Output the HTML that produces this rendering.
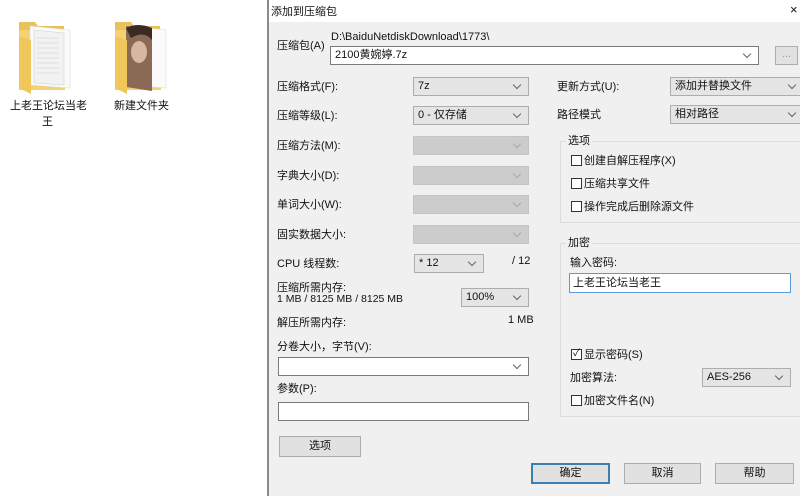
<!DOCTYPE html>
<html><head><meta charset="utf-8"><style>
*{box-sizing:border-box;margin:0;padding:0}
body{width:800px;height:496px;overflow:hidden;background:#fff;position:relative;font-family:"Liberation Sans","Noto Sans CJK SC",sans-serif;font-size:11px;color:#111}
.a{position:absolute;white-space:nowrap}
.dlg{position:absolute;left:267px;top:0;width:533px;height:496px;background:#f0f0f0;border-left:2px solid #8a8a8a}
.tb{position:absolute;left:269px;top:0;width:531px;height:22px;background:#fff}
.cb{position:absolute;height:19px;border:1px solid #adadad;background:#e5e5e5;padding-left:4px;line-height:17px;font-size:11px}
.cb.w{background:#fff;border-color:#7a7a7a}
.cb.d{background:#cccccc;border-color:#c4c4c4}
.cb:after{content:"";position:absolute;right:8px;top:4px;width:5px;height:5px;border-right:1px solid #666;border-bottom:1px solid #666;transform:rotate(45deg)}
.cb.d:after{border-color:#aaa}
.chk{position:absolute;width:11px;height:11px;border:1px solid #333;background:#fff}
.btn{position:absolute;height:21px;border:1px solid #adadad;background:#e1e1e1;text-align:center;line-height:19px}
.grp{position:absolute;border:1px solid #dcdcdc}
.gt{position:absolute;background:#f0f0f0;padding:0 2px}
.fold{position:absolute}
</style></head><body>
<svg class="fold" style="left:16px;top:16px" width="60" height="78" viewBox="0 0 60 78">
<path d="M3 6h16l3 4h26v8H3z" fill="#e8c25a"/>
<path d="M3 14h46v60H3z" fill="#f4d272"/>
<path d="M14 10l40 4v58l-40-3z" fill="#fafafa" stroke="#ddd" stroke-width=".6"/>
<path d="M18 14l30 3v52l-30-2z" fill="#f2f2f2" stroke="#ccc" stroke-width=".5"/>
<g stroke="#c8c8c8" stroke-width=".6"><path d="M21 22h22M21 27h22M21 32h22M21 37h22M21 42h22M21 47h22M21 52h22M21 57h22"/></g>
<path d="M3 20l12 4v54L3 72z" fill="#f0c75a"/>
</svg>
<div class="a" style="left:10px;top:97px;font-size:11px">上老王论坛当老</div>
<div class="a" style="left:42px;top:113px;font-size:11px">王</div>
<svg class="fold" style="left:112px;top:16px" width="60" height="78" viewBox="0 0 60 78">
<path d="M3 6h16l3 4h26v8H3z" fill="#e8c25a"/>
<path d="M3 14h46v60H3z" fill="#f4d272"/>
<path d="M14 10l40 4v58l-40-3z" fill="#fbfbfb" stroke="#ddd" stroke-width=".6"/>
<path d="M14 10l26 2v63l-26-4z" fill="#8a6a55"/>
<ellipse cx="27" cy="36" rx="8" ry="11" fill="#d7b7a2"/>
<path d="M14 12q12-6 26 0v12q-8-10-21-2z" fill="#3a2a22"/>
<path d="M3 20l12 4v54L3 72z" fill="#f0c75a"/>
</svg>
<div class="a" style="left:114px;top:97px;font-size:11px">新建文件夹</div>

<div class="dlg"></div>
<div class="tb"></div>
<div class="a" style="left:271px;top:3px">添加到压缩包</div>
<div class="a" style="left:790px;top:2px;font-size:13px">×</div>

<div class="a" style="left:277px;top:37px">压缩包(A)</div>
<div class="a" style="left:331px;top:31px">D:\BaiduNetdiskDownload\1773\</div>
<div class="cb w" style="left:330px;top:46px;width:429px">2100黄婉婷.7z</div>
<div class="btn" style="left:775px;top:46px;width:23px;height:19px;color:#999;line-height:15px">...</div>

<div class="a" style="left:277px;top:78px">压缩格式(F):</div>
<div class="cb" style="left:413px;top:77px;width:116px">7z</div>
<div class="a" style="left:277px;top:107px">压缩等级(L):</div>
<div class="cb" style="left:413px;top:106px;width:116px">0 - 仅存储</div>
<div class="a" style="left:277px;top:137px">压缩方法(M):</div>
<div class="cb d" style="left:413px;top:136px;width:116px"></div>
<div class="a" style="left:277px;top:167px">字典大小(D):</div>
<div class="cb d" style="left:413px;top:166px;width:116px"></div>
<div class="a" style="left:277px;top:196px">单词大小(W):</div>
<div class="cb d" style="left:413px;top:195px;width:116px"></div>
<div class="a" style="left:277px;top:226px">固实数据大小:</div>
<div class="cb d" style="left:413px;top:225px;width:116px"></div>
<div class="a" style="left:277px;top:255px">CPU 线程数:</div>
<div class="cb" style="left:414px;top:254px;width:70px">* 12</div>
<div class="a" style="left:512px;top:255px">/ 12</div>
<div class="a" style="left:277px;top:279px">压缩所需内存:</div>
<div class="a" style="left:277px;top:293px;font-size:10.5px">1 MB / 8125 MB / 8125 MB</div>
<div class="cb" style="left:461px;top:288px;width:68px">100%</div>
<div class="a" style="left:277px;top:314px">解压所需内存:</div>
<div class="a" style="left:508px;top:314px">1 MB</div>
<div class="a" style="left:277px;top:338px">分卷大小，字节(V):</div>
<div class="cb w" style="left:278px;top:357px;width:251px"></div>
<div class="a" style="left:277px;top:380px">参数(P):</div>
<div style="position:absolute;left:278px;top:402px;width:251px;height:19px;border:1px solid #7a7a7a;background:#fff"></div>
<div class="btn" style="left:279px;top:436px;width:82px">选项</div>

<div class="a" style="left:557px;top:78px">更新方式(U):</div>
<div class="cb" style="left:670px;top:77px;width:134px">添加并替换文件</div>
<div class="a" style="left:557px;top:106px">路径模式</div>
<div class="cb" style="left:670px;top:105px;width:134px">相对路径</div>

<div class="grp" style="left:560px;top:141px;width:245px;height:82px"></div>
<div class="gt a" style="left:566px;top:132px">选项</div>
<div class="chk" style="left:571px;top:155px"></div><div class="a" style="left:584px;top:152px">创建自解压程序(X)</div>
<div class="chk" style="left:571px;top:178px"></div><div class="a" style="left:584px;top:175px">压缩共享文件</div>
<div class="chk" style="left:571px;top:201px"></div><div class="a" style="left:584px;top:198px">操作完成后删除源文件</div>

<div class="grp" style="left:560px;top:243px;width:245px;height:174px"></div>
<div class="gt a" style="left:566px;top:234px">加密</div>
<div class="a" style="left:570px;top:254px">输入密码:</div>
<div class="a" style="left:569px;top:273px;width:222px;height:20px;border:1px solid #5b9bd5;background:#fff;padding-left:3px;line-height:18px">上老王论坛当老王</div>
<div class="chk" style="left:571px;top:349px;text-align:center;line-height:8px;font-size:10px">✓</div><div class="a" style="left:584px;top:346px">显示密码(S)</div>
<div class="a" style="left:570px;top:369px">加密算法:</div>
<div class="cb" style="left:702px;top:368px;width:89px">AES-256</div>
<div class="chk" style="left:571px;top:395px"></div><div class="a" style="left:584px;top:392px">加密文件名(N)</div>

<div class="btn" style="left:531px;top:463px;width:79px;border:2px solid #3c7fb1;line-height:17px">确定</div>
<div class="btn" style="left:624px;top:463px;width:77px">取消</div>
<div class="btn" style="left:715px;top:463px;width:79px">帮助</div>
</body></html>
